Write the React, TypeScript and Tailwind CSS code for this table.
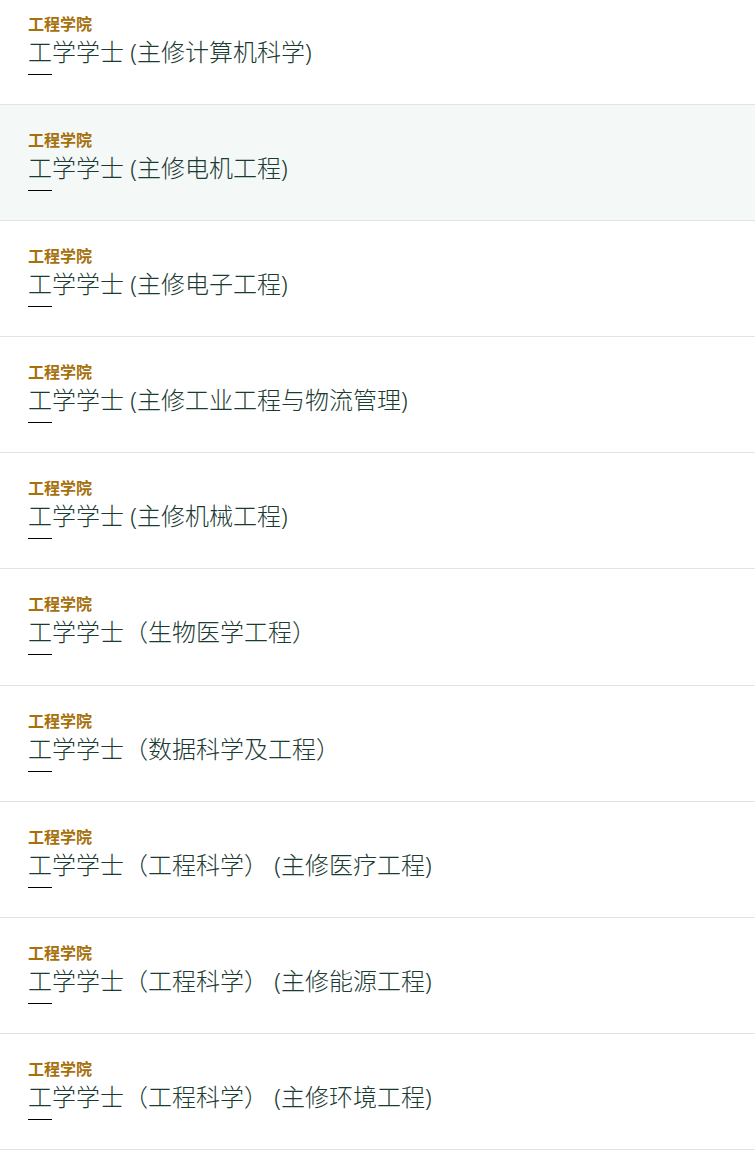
import React from "react";

const items = [
  "工学学士 (主修计算机科学)",
  "工学学士 (主修电机工程)",
  "工学学士 (主修电子工程)",
  "工学学士 (主修工业工程与物流管理)",
  "工学学士 (主修机械工程)",
  "工学学士（生物医学工程）",
  "工学学士（数据科学及工程）",
  "工学学士（工程科学） (主修医疗工程)",
  "工学学士（工程科学） (主修能源工程)",
  "工学学士（工程科学） (主修环境工程)",
];

export default function App() {
  return (
    <div
      className="w-[755px] bg-white overflow-hidden"
      style={{ fontFamily: '"Noto Sans", "Noto Sans CJK SC", sans-serif' }}
    >
      {items.map((t, i) => (
        <div
          key={i}
          className={`border-b border-[#e3e3e3] pl-[28px] pr-4 pb-[29.1px] ${
            i === 0 ? "pt-[12px]" : "pt-[23px]"
          } ${i === 1 ? "bg-[#f4f8f7]" : "bg-white"}`}
        >
          <div className="text-[16px] leading-[24px] font-bold text-[#a6700a]">
            工程学院
          </div>
          <div className="text-[24px] leading-[32px] font-light text-[#1b3a32]">{t}</div>
          <div className="mt-[6px] w-[24px] h-[1px] bg-black" />
        </div>
      ))}
    </div>
  );
}
